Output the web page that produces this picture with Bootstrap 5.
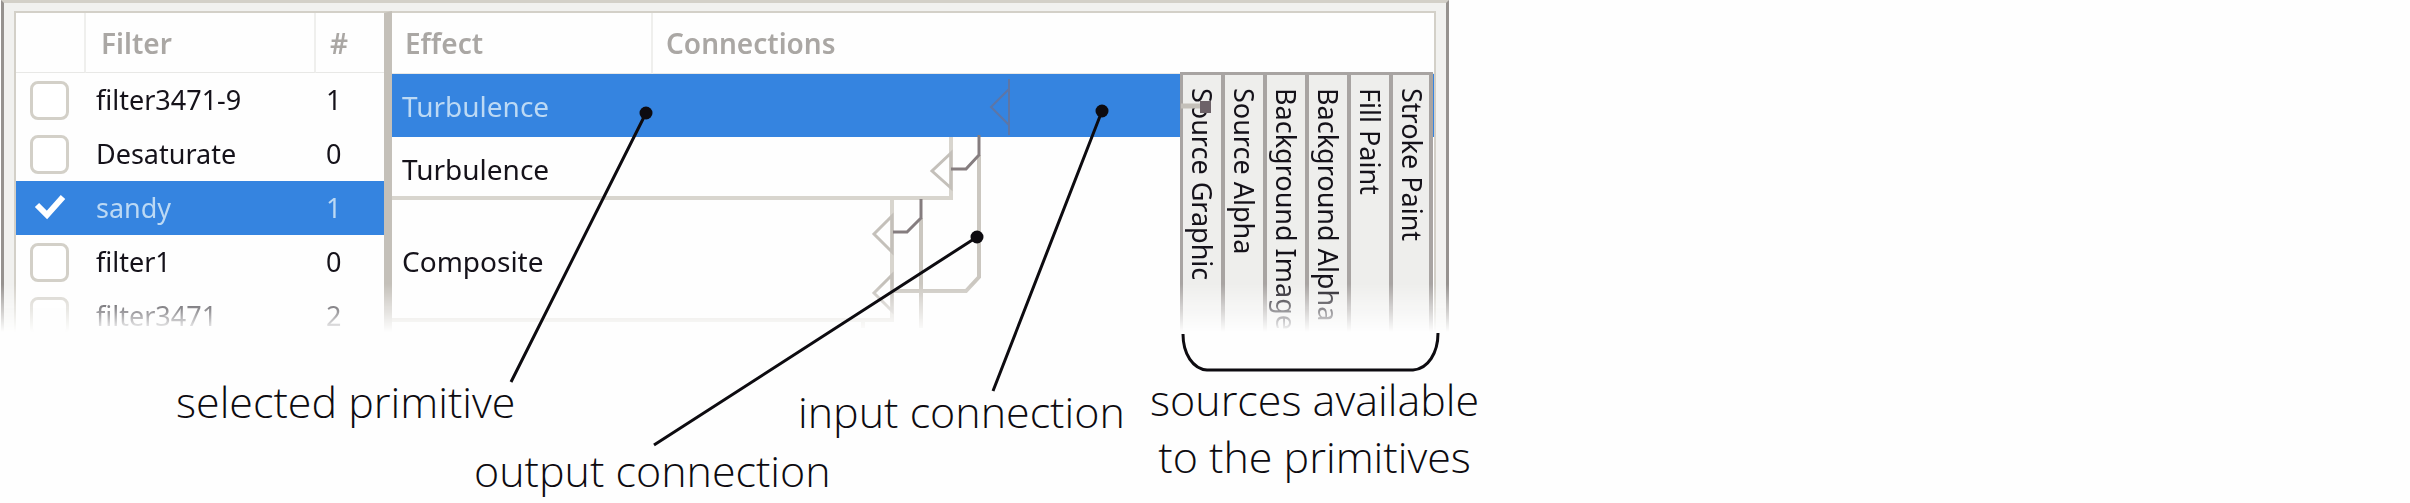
<!DOCTYPE html>
<html lang="en">
<head>
<meta charset="utf-8">
<meta name="viewport" content="width=device-width, initial-scale=1">
<title>Filter effects dialog</title>
<link href="https://cdn.jsdelivr.net/npm/bootstrap@5.3.0/dist/css/bootstrap.min.css" rel="stylesheet">
<style>
  :root { --line: #d3d0c8; --edge: #a8a4a2; --accent: #3584e0; }
  body { font-family: "Noto Sans", "Open Sans", sans-serif; background: #fefefe; color: #15121a; }
  .diagram { max-width: 1560px; min-height: 500px; }
  .dialog-box {
    max-width: 1448px; padding: 8px 10px 0 10px; margin-left: 1px;
    background: #f1f1ef; border: 3px solid var(--line); border-bottom: 0;
    border-left-color: #96928f; border-right-color: #96928f;
    font-size: 28px; line-height: 36px;
    -webkit-mask-image: linear-gradient(#000 284px, transparent 332px);
    mask-image: linear-gradient(#000 284px, transparent 332px);
  }
  .pane { background: #fefefe; border-top: 2px solid var(--line); }
  .filters { width: 378px; flex: none; border-left: 2px solid var(--line); border-right: 8px solid #c4c0b9; }
  .effects { border-right: 2px solid var(--line); }
  table { width: 100%; table-layout: fixed; border-collapse: separate; border-spacing: 0; }
  th, td { padding: 0; white-space: nowrap; }
  thead th { height: 60px; font-weight: 600; color: #aaa7a4; border-bottom: 1px solid #e8e8e6; border-right: 2px solid #efefed; }
  .effects thead th { height: 61px; }
  thead th:last-child { border-right: 0; }
  .filters tbody { font-size: 27px; }
  .filters tbody tr { height: 54px; }
  .filters tbody td { padding-left: 10px; }
  .filters tbody td:first-child { padding-left: 14px; line-height: 1; }
  .picked td { background: var(--accent); color: #bcd9f4; }
  .form-check-input.tick {
    display: block; width: 39px; height: 39px; margin: 0; border: 3px solid var(--line); border-radius: 8px;
  }
  .form-check-input.tick:checked {
    background-color: transparent; border-color: transparent; background-size: 39px 39px;
    background-image: url("data:image/svg+xml,%3Csvg xmlns='http://www.w3.org/2000/svg' viewBox='0 0 39 39'%3E%3Cpath d='M7 16l10 10L33 8' fill='none' stroke='%23fff' stroke-width='6'/%3E%3C/svg%3E");
  }
  .effects tbody td { height: 63px; padding-left: 10px; }
  .effects tbody tr.tall td { height: 121px; }
  .sources { top: 59px; right: 1px; width: 253px; bottom: 0; font-size: 27px; border: 3px solid var(--edge); border-right-width: 4px; border-bottom: 0; background: #eeeeec; }
  .sources li { flex: 1 1 0; writing-mode: vertical-rl; padding-top: 13px; white-space: nowrap; line-height: 38px; }
  .sources li + li { border-left: 4px solid var(--edge); }
  .wires { top: 0; left: 0; }
  .note { font-family: "Open Sans", "Noto Sans", sans-serif; font-weight: 300; font-size: 43px; line-height: 57px; color: #0d0b10; white-space: nowrap; }
  .n-selected { left: 176px; top: 373px; }
  .n-output { left: 474px; top: 442px; }
  .n-input { left: 798px; top: 383px; }
  .n-sources { left: 1150px; top: 371px; }
</style>
</head>
<body>
<figure class="diagram position-relative m-0">
  <div class="dialog-box d-flex">
    <section class="pane filters">
      <table>
        <colgroup><col style="width:70px"><col style="width:230px"><col></colgroup>
        <thead><tr><th></th><th style="padding-left:15px">Filter</th><th style="padding-left:14px">#</th></tr></thead>
        <tbody>
          <tr><td><input class="form-check-input tick" type="checkbox" id="f1"></td><td><label for="f1">filter3471-9</label></td><td>1</td></tr>
          <tr><td><input class="form-check-input tick" type="checkbox" id="f2"></td><td><label for="f2">Desaturate</label></td><td>0</td></tr>
          <tr class="picked"><td><input class="form-check-input tick" type="checkbox" id="f3" checked></td><td><label for="f3">sandy</label></td><td>1</td></tr>
          <tr><td><input class="form-check-input tick" type="checkbox" id="f4"></td><td><label for="f4">filter1</label></td><td>0</td></tr>
          <tr><td><input class="form-check-input tick" type="checkbox" id="f5"></td><td><label for="f5">filter3471</label></td><td>2</td></tr>
        </tbody>
      </table>
    </section>
    <section class="pane effects flex-grow-1 position-relative">
      <table>
        <colgroup><col style="width:261px"><col></colgroup>
        <thead><tr><th style="padding-left:13px">Effect</th><th style="padding-left:13px">Connections</th></tr></thead>
        <tbody>
          <tr class="picked"><td>Turbulence</td><td></td></tr>
          <tr><td>Turbulence</td><td></td></tr>
          <tr class="tall"><td>Composite</td><td></td></tr>
        </tbody>
      </table>
      <ul class="sources position-absolute d-flex list-unstyled m-0">
        <li>Source Graphic</li><li>Source Alpha</li><li>Background Image</li><li>Background Alpha</li><li>Fill Paint</li><li>Stroke Paint</li>
      </ul>
    </section>
    <svg class="wires position-absolute" width="1448" height="330" fill="none" stroke-width="4" aria-hidden="true">
      <g stroke="#d8d5ce">
        <path d="M392 198H951V137M392 320H892V200M863 320v8"/>
        <path d="M979 155V277L966 291H893M921 218V328" stroke="#cbc7c0"/>
      </g>
      <g stroke="#c4c0ba" stroke-width="3">
        <path d="M951 153L932 171L951 188ZM892 216L874 234L892 252ZM892 275L874 293L892 311Z"/>
      </g>
      <g stroke="#857d7f" stroke-width="3">
        <path d="M979 135V155L966 169H951M921 199V218L907 232H893"/>
      </g>
      <path d="M1009 89L991 107L1009 125ZM1009 79V135" stroke="#5d76a6" stroke-width="2"/>
      <path d="M1181 106H1201" stroke="#c4c0b9" stroke-width="5"/>
      <path d="M1200 101h11v12h-11z" fill="#6d6268"/>
    </svg>
  </div>
  <svg class="wires position-absolute" width="1560" height="500" fill="none" stroke="#0d0b10" stroke-width="3" aria-hidden="true">
    <path d="M646 113L511 382M977 237L654 445M1102 111L993 391"/>
    <path d="M1183 334C1183 354 1193 369 1207 370H1413C1428 369 1438 353 1438 333"/>
    <g fill="#0d0b10" stroke="none"><circle cx="646" cy="113" r="6.5"/><circle cx="977" cy="237" r="6.5"/><circle cx="1102" cy="111" r="6.5"/></g>
  </svg>
  <figcaption>
    <div class="note n-selected position-absolute">selected primitive</div>
    <div class="note n-output position-absolute">output connection</div>
    <div class="note n-input position-absolute">input connection</div>
    <div class="note n-sources position-absolute text-center">sources available<br>to the primitives</div>
  </figcaption>
</figure>
<script src="https://cdn.jsdelivr.net/npm/bootstrap@5.3.0/dist/js/bootstrap.bundle.min.js"></script>
</body>
</html>
